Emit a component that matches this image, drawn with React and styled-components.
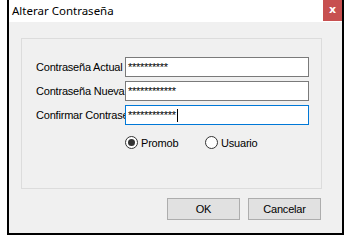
import React from "react";
import styled, { createGlobalStyle } from "styled-components";

const GlobalStyle = createGlobalStyle`
	body {
		margin: 0;
		background: #ffffff;
		font-family: "Liberation Sans", Arial, sans-serif;
	}
`;

const Window = styled.div`
	margin-left: 7px;
	width: 333px;
	height: 233px;
	border: 2px solid #000;
	border-top: none;
	background: #f0f0f0;
	display: flex;
	flex-direction: column;
`;

const TitleBar = styled.div`
	height: 22px;
	background: #fff;
	display: flex;
	align-items: flex-start;
	justify-content: space-between;
`;

const Title = styled.span`
	font-family: "Noto Sans", "Open Sans", sans-serif;
	font-size: 11.5px;
	color: #000;
	padding: 3px 0 0 3px;
	line-height: 16px;
`;

const CloseButton = styled.div`
	width: 19px;
	height: 21px;
	background: #c75050;
	color: #fff;
	font-family: "DejaVu Sans", sans-serif;
	font-weight: bold;
	font-size: 11px;
	display: flex;
	align-items: center;
	justify-content: center;
	padding-bottom: 2px;
	box-sizing: border-box;
`;

const Body = styled.div`
	padding: 16px 20px 0 12px;
	display: flex;
	flex-direction: column;
`;

const Group = styled.div`
	height: 151px;
	box-sizing: border-box;
	border: 1px solid #dcdcdc;
	padding: 18px 0 0 14px;
	display: flex;
	flex-direction: column;
	gap: 4px;
`;

const Row = styled.div`
	display: flex;
	align-items: center;
	height: 20px;
`;

const Label = styled.span`
	width: 89px;
	overflow: hidden;
	white-space: nowrap;
	font-size: 11px;
	letter-spacing: -0.2px;
	color: #000;
`;

const Field = styled.div`
	width: 184px;
	height: 20px;
	box-sizing: border-box;
	background: #fff;
	border: 1px solid ${(p) => (p.$focused ? "#0078d7" : "#7a7a7a")};
	padding: 2px 0 0 2px;
	font-size: 11px;
	line-height: 14px;
	letter-spacing: -0.3px;
	color: #000;
	display: flex;
	align-items: flex-start;
`;

const Caret = styled.span`
	display: inline-block;
	width: 1px;
	height: 13px;
	background: #000;
	margin-left: 1px;
	margin-top: 1px;
`;

const RadioRow = styled.div`
	display: flex;
	padding-left: 89px;
	margin-top: 7px;
`;

const RadioItem = styled.label`
	display: flex;
	align-items: center;
	gap: 3px;
	width: 80px;
	font-size: 11px;
	letter-spacing: -0.2px;
	color: #000;
`;

const RadioCircle = styled.span`
	width: 13px;
	height: 13px;
	box-sizing: border-box;
	border: 1px solid #333;
	border-radius: 50%;
	background: #fff;
	display: flex;
	align-items: center;
	justify-content: center;
	&::after {
		content: "";
		width: 7px;
		height: 7px;
		border-radius: 50%;
		background: ${(p) => (p.$checked ? "#333" : "transparent")};
	}
`;

const Buttons = styled.div`
	display: flex;
	justify-content: flex-end;
	gap: 8px;
	margin-top: 9px;
	padding-right: 1px;
`;

const Button = styled.div`
	width: 73px;
	height: 22px;
	box-sizing: border-box;
	border: 1px solid #adadad;
	background: #e1e1e1;
	font-size: 11px;
	letter-spacing: -0.2px;
	color: #000;
	display: flex;
	align-items: center;
	justify-content: center;
`;

const fields = [
	{ label: "Contraseña Actual", value: "**********" },
	{ label: "Contraseña Nueva", value: "************" },
	{ label: "Confirmar Contraseña", value: "************", focused: true },
];

const App = () => {
	return (
		<>
			<GlobalStyle />
			<Window>
				<TitleBar>
					<Title>Alterar Contraseña</Title>
					<CloseButton>x</CloseButton>
				</TitleBar>
				<Body>
					<Group>
						{fields.map((f) => (
							<Row key={f.label}>
								<Label>{f.label}</Label>
								<Field $focused={f.focused}>
									{f.value}
									{f.focused && <Caret />}
								</Field>
							</Row>
						))}
						<RadioRow>
							<RadioItem>
								<RadioCircle $checked />
								Promob
							</RadioItem>
							<RadioItem>
								<RadioCircle />
								Usuario
							</RadioItem>
						</RadioRow>
					</Group>
					<Buttons>
						<Button>OK</Button>
						<Button>Cancelar</Button>
					</Buttons>
				</Body>
			</Window>
		</>
	);
};

export default App;
